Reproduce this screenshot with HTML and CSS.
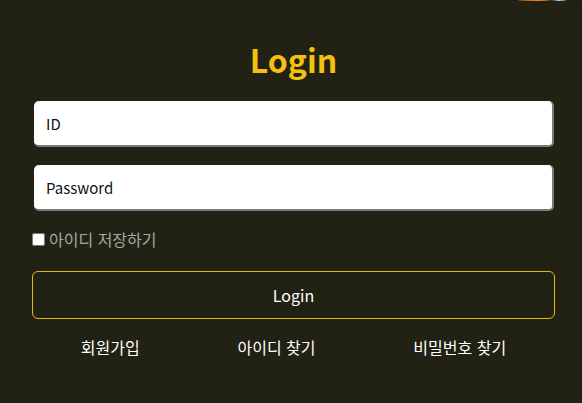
FILE: index.html
```html
<!DOCTYPE html>
<html lang="ko">
<head>
<meta charset="utf-8">
<title>Login</title>
<link rel="stylesheet" href="styles.css">
</head>
<body>
<div class="topbar"><span class="topbar-img"></span></div>
<main class="login">
  <h1 class="login-title">Login</h1>
  <form class="login-form">
    <input class="field" type="text" placeholder="ID">
    <input class="field field-pw" type="password" placeholder="Password">
    <label class="remember"><input class="remember-box" type="checkbox"><span>아이디 저장하기</span></label>
    <button class="login-btn" type="button">Login</button>
  </form>
  <nav class="links">
    <a class="link" href="#">회원가입</a>
    <a class="link" href="#">아이디 찾기</a>
    <a class="link" href="#">비밀번호 찾기</a>
  </nav>
</main>
</body>
</html>
```
FILE: styles.css
```css
* { box-sizing: border-box; }
html, body {
  margin: 0;
  padding: 0;
  background: #212114;
  font-family: "Noto Sans CJK KR", "Noto Sans", sans-serif;
  height: 100%;
}
.topbar {
  height: 1px;
  background: #1b1c1a;
  display: flex;
  justify-content: flex-end;
}
.topbar-img {
  width: 48px;
  margin-right: 16px;
  background: linear-gradient(90deg, #5a3a10 0%, #c06a10 20%, #f08a10 45%, #a05a10 60%, #2a2a20 70%, #c0d0d8 85%, #3a6070 100%);
}
.login {
  margin: 0 27px 0 32px;
}
.login-title {
  margin: 38px 0 0;
  text-align: center;
  font-size: 32px;
  line-height: 40px;
  font-weight: 700;
  color: #f4c20d;
}
.login-form {
  display: flex;
  flex-direction: column;
  margin-top: 22px;
}
.field {
  display: block;
  margin: 0 0 0 2px;
  width: 520px;
  height: 46px;
  border: none;
  border-right: 2px solid #7a7a7a;
  border-bottom: 2px solid #7a7a7a;
  border-radius: 5px;
  background: #fff;
  padding: 0 0 0 12px;
  font-family: "Noto Sans CJK KR", "Noto Sans", sans-serif;
  font-size: 15px;
  color: #111;
  outline: none;
}
.field::placeholder { color: #111; opacity: 1; }
.field-pw { margin-top: 18px; }
.remember {
  display: flex;
  align-items: center;
  margin-top: 18px;
  height: 20px;
  font-size: 16px;
  color: #a8a8a4;
}
.remember-box {
  width: 13px;
  height: 13px;
  margin: 0 4px 0 0;
}
.login-btn {
  margin-top: 22px;
  height: 48px;
  width: 523px;
  background: transparent;
  border: 1px solid #e8b90a;
  border-radius: 6px;
  color: #fff;
  font-family: "Noto Sans CJK KR", "Noto Sans", sans-serif;
  font-size: 16px;
  cursor: pointer;
}
.links {
  display: flex;
  justify-content: space-around;
  width: 523px;
  margin-top: 17px;
}
.link {
  color: #fff;
  text-decoration: none;
  font-size: 16px;
  line-height: 22px;
}
```
